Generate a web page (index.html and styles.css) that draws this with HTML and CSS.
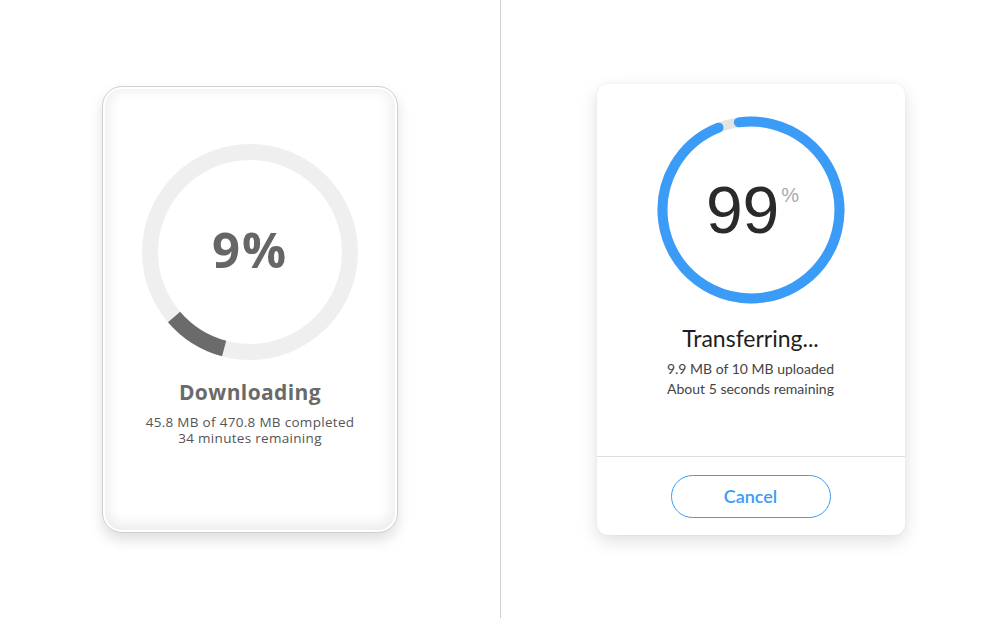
FILE: index.html
```html
<!DOCTYPE html>
<html>
<head>
<meta charset="utf-8">
<link rel="stylesheet" href="styles.css">
</head>
<body>
<main class="stage">
  <section class="half">
    <div class="dl-card">
      <div class="dl-ring">
        <svg width="216" height="216" viewBox="0 0 216 216">
          <circle cx="108" cy="108" r="100" fill="none" stroke="#efefef" stroke-width="16"/>
          <circle cx="108" cy="108" r="100" fill="none" stroke="#6b6b6b" stroke-width="16" stroke-dasharray="60 700" transform="rotate(105 108 108)"/>
        </svg>
        <div class="dl-pct">9%</div>
      </div>
      <h2 class="dl-title">Downloading</h2>
      <p class="dl-sub">45.8 MB of 470.8 MB completed<br>34 minutes remaining</p>
    </div>
  </section>
  <section class="half half-right">
    <div class="tr-card">
      <div class="tr-body">
        <div class="tr-ring">
          <svg width="188" height="188" viewBox="0 0 188 188">
            <circle cx="94" cy="94" r="88.5" fill="none" stroke="#e4e4e4" stroke-width="10"/>
            <circle cx="94" cy="94" r="88.5" fill="none" stroke="#3a9cf6" stroke-width="10" stroke-linecap="round" stroke-dasharray="534 600" transform="rotate(-97.9 94 94)"/>
          </svg>
          <div class="tr-pct"><span class="tr-num">99</span><span class="tr-sign">%</span></div>
        </div>
        <h2 class="tr-title">Transferring...</h2>
        <p class="tr-sub">9.9 MB of 10 MB uploaded<br>About 5 seconds remaining</p>
      </div>
      <div class="tr-foot">
        <button class="tr-cancel">Cancel</button>
      </div>
    </div>
  </section>
</main>
</body>
</html>
```

FILE: styles.css
```css
* { box-sizing: border-box; }
html, body { margin: 0; padding: 0; }
body {
  width: 1000px;
  height: 618px;
  background: #ffffff;
  overflow: hidden;
}
.stage {
  display: grid;
  grid-template-columns: 500px 500px;
  height: 618px;
}
.half {
  display: flex;
  align-items: center;
  justify-content: center;
}
.half-right {
  border-left: 1px solid #cfcfcf;
}

/* Left card */
.dl-card {
  width: 296px;
  height: 447px;
  border: 1px solid #cfcfcf;
  border-radius: 20px;
  background: #ffffff;
  box-shadow:
    inset 0 0 0 2px #ffffff,
    inset 0 -3px 14px 5px rgba(0, 0, 0, 0.08),
    0 7px 14px rgba(0, 0, 0, 0.13);
  display: flex;
  flex-direction: column;
  align-items: center;
  padding-top: 57px;
  font-family: "Open Sans", "Noto Sans", sans-serif;
  color: #666666;
}
.dl-ring {
  position: relative;
  width: 216px;
  height: 216px;
}
.dl-ring svg { display: block; }
.dl-pct {
  position: absolute;
  inset: 0;
  display: flex;
  align-items: center;
  justify-content: center;
  font-size: 49px;
  font-weight: 700;
  letter-spacing: 2px;
  color: #666666;
  padding-bottom: 6px;
}
.dl-title {
  margin: 19px 0 0;
  font-size: 21px;
  line-height: 26px;
  font-weight: 700;
  letter-spacing: 0.4px;
  color: #6a6a6a;
}
.dl-sub {
  margin: 9px 0 0;
  font-size: 13.5px;
  line-height: 16px;
  letter-spacing: 0.3px;
  text-align: center;
  color: #555555;
}

/* Right card */
.tr-card {
  width: 308px;
  height: 451px;
  background: #ffffff;
  border-radius: 11px;
  box-shadow: 0 6px 18px rgba(0, 0, 0, 0.13), 0 0 3px rgba(0, 0, 0, 0.05);
  display: flex;
  flex-direction: column;
  font-family: "Lato", "Inter", sans-serif;
}
.tr-body {
  flex: 1;
  display: flex;
  flex-direction: column;
  align-items: center;
  padding-top: 32px;
  border-bottom: 1px solid #dedede;
}
.tr-ring {
  position: relative;
  width: 188px;
  height: 188px;
}
.tr-ring svg { display: block; }
.tr-pct {
  position: absolute;
  inset: 0;
  display: flex;
  align-items: center;
  justify-content: center;
  padding-left: 4px;
}
.tr-num {
  font-family: "Liberation Sans", sans-serif;
  font-size: 66px;
  font-weight: 400;
  color: #2a2a2a;
  line-height: 1;
}
.tr-sign {
  align-self: flex-start;
  margin-top: 68px;
  margin-left: 2px;
  font-family: "Liberation Sans", sans-serif;
  font-size: 20px;
  color: #aaaaaa;
}
.tr-title {
  margin: 20px 0 0;
  font-size: 23px;
  line-height: 28px;
  font-weight: 400;
  color: #1e1e1e;
}
.tr-sub {
  margin: 7px 0 0;
  font-size: 14px;
  line-height: 20px;
  text-align: center;
  color: #444444;
}
.tr-foot {
  height: 78px;
  display: flex;
  align-items: center;
  justify-content: center;
}
.tr-cancel {
  width: 160px;
  height: 43px;
  border: 1px solid #3a9cf6;
  border-radius: 22px;
  background: #ffffff;
  color: #3a9cf6;
  font-family: "Lato", "Inter", sans-serif;
  font-size: 18px;
  font-weight: 600;
  padding: 0;
  margin-top: 1px;
}
```
